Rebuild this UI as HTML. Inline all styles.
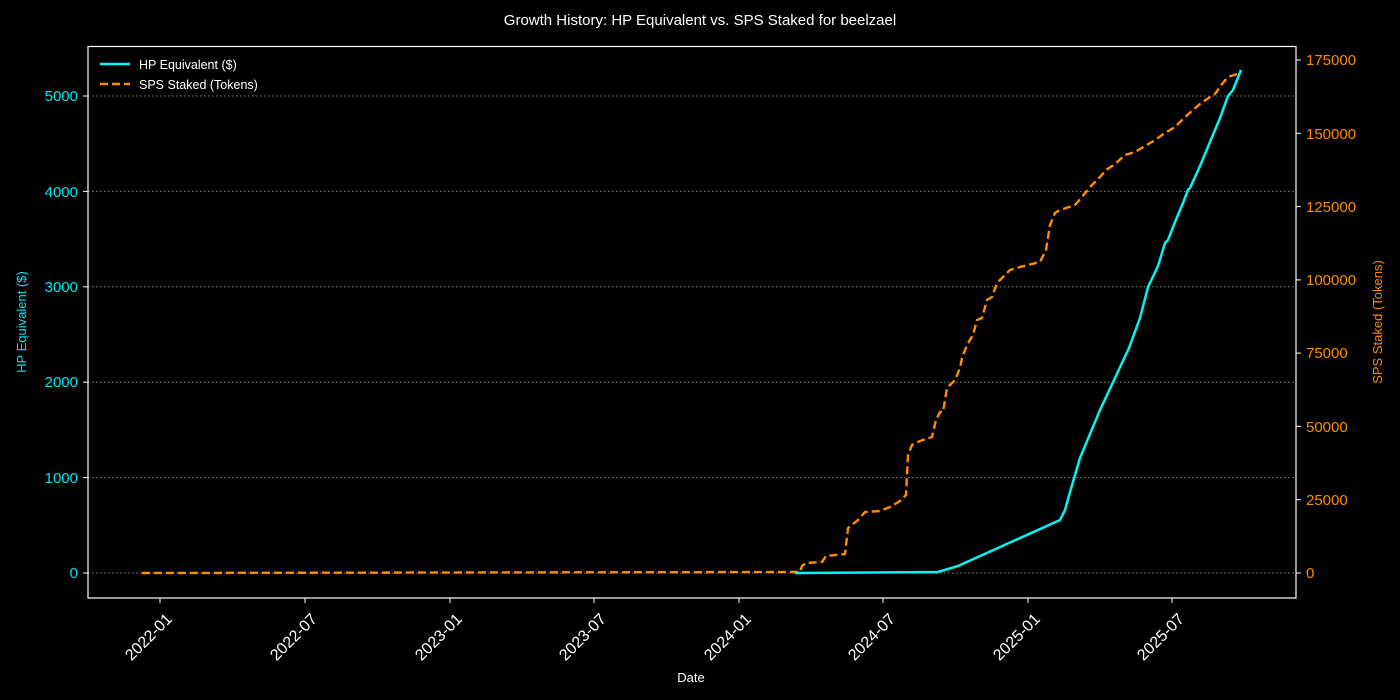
<!DOCTYPE html>
<html><head><meta charset="utf-8"><style>
html,body{margin:0;padding:0;background:#000;width:1400px;height:700px;overflow:hidden}
svg text{font-family:"Liberation Sans",sans-serif}
</style></head><body>
<svg width="1400" height="700" viewBox="0 0 1400 700" xmlns="http://www.w3.org/2000/svg">
<rect width="1400" height="700" fill="#000"/>
<text x="700" y="25" fill="#fff" font-size="15" text-anchor="middle">Growth History: HP Equivalent vs. SPS Staked for beelzael</text>
<g stroke="#888" stroke-width="1" stroke-dasharray="1.5,2.5">
<line x1="88" x2="1296" y1="573" y2="573"/>
<line x1="88" x2="1296" y1="477.6" y2="477.6"/>
<line x1="88" x2="1296" y1="382.2" y2="382.2"/>
<line x1="88" x2="1296" y1="286.8" y2="286.8"/>
<line x1="88" x2="1296" y1="191.4" y2="191.4"/>
<line x1="88" x2="1296" y1="96" y2="96"/>
</g>
<rect x="88" y="46.5" width="1208" height="551.5" fill="none" stroke="#fff" stroke-width="1.2"/>
<g stroke="#fff" stroke-width="1">
<line x1="83" x2="88" y1="573" y2="573"/><line x1="83" x2="88" y1="477.6" y2="477.6"/><line x1="83" x2="88" y1="382.2" y2="382.2"/><line x1="83" x2="88" y1="286.8" y2="286.8"/><line x1="83" x2="88" y1="191.4" y2="191.4"/><line x1="83" x2="88" y1="96" y2="96"/>
<line x1="1296" x2="1301" y1="573" y2="573"/><line x1="1296" x2="1301" y1="499.7" y2="499.7"/><line x1="1296" x2="1301" y1="426.4" y2="426.4"/><line x1="1296" x2="1301" y1="353.1" y2="353.1"/><line x1="1296" x2="1301" y1="279.9" y2="279.9"/><line x1="1296" x2="1301" y1="206.6" y2="206.6"/><line x1="1296" x2="1301" y1="133.3" y2="133.3"/><line x1="1296" x2="1301" y1="60" y2="60"/>
<line x1="160" x2="160" y1="598" y2="603"/><line x1="305" x2="305" y1="598" y2="603"/><line x1="450" x2="450" y1="598" y2="603"/><line x1="594" x2="594" y1="598" y2="603"/><line x1="739" x2="739" y1="598" y2="603"/><line x1="883" x2="883" y1="598" y2="603"/><line x1="1028" x2="1028" y1="598" y2="603"/><line x1="1172" x2="1172" y1="598" y2="603"/>
</g>
<g fill="#00e5ee" font-size="15" text-anchor="end">
<text x="78" y="578">0</text><text x="78" y="483">1000</text><text x="78" y="387">2000</text><text x="78" y="292">3000</text><text x="78" y="197">4000</text><text x="78" y="101">5000</text>
</g>
<g fill="#ff8c00" font-size="15">
<text x="1306" y="578">0</text><text x="1306" y="505">25000</text><text x="1306" y="432">50000</text><text x="1306" y="358">75000</text><text x="1306" y="285">100000</text><text x="1306" y="212">125000</text><text x="1306" y="139">150000</text><text x="1306" y="65">175000</text>
</g>
<text transform="translate(26,322) rotate(-90)" fill="#00e5ee" font-size="13" text-anchor="middle">HP Equivalent ($)</text>
<text transform="translate(1382,322) rotate(-90)" fill="#ff8c00" font-size="13" text-anchor="middle">SPS Staked (Tokens)</text>
<g fill="#fff" font-size="16" text-anchor="end">
<text transform="translate(173,620) rotate(-45)">2022-01</text>
<text transform="translate(318,620) rotate(-45)">2022-07</text>
<text transform="translate(463,620) rotate(-45)">2023-01</text>
<text transform="translate(607,620) rotate(-45)">2023-07</text>
<text transform="translate(752,620) rotate(-45)">2024-01</text>
<text transform="translate(896,620) rotate(-45)">2024-07</text>
<text transform="translate(1041,620) rotate(-45)">2025-01</text>
<text transform="translate(1185,620) rotate(-45)">2025-07</text>
</g>
<text x="691" y="682" fill="#fff" font-size="13" text-anchor="middle">Date</text>
<polyline fill="none" stroke="#ff8c00" stroke-width="2.4" stroke-dasharray="8,4" points="142,573 795,572 800,572 802,566 806,563 822,562 826,556 845,554 848,528 858,520 865,512 880,511 890,507 900,501 906,495 908,455 912,445 920,441 932,437 936,420 940,412 943,412 947,388 955,380 960,368 962,358 967,345 973,335 977,320 982,318 987,300 992,297 997,283 1000,280 1010,270 1020,267 1040,262 1046,250 1050,225 1055,213 1060,210 1075,205 1082,197 1090,187 1100,177 1106,170 1115,164 1125,155 1135,152 1145,146 1155,140 1165,133 1175,127 1185,117 1200,104 1210,97 1215,94 1222,84 1228,77 1234,75 1240,73"/>
<polyline fill="none" stroke="#00f5f5" stroke-width="2.5" points="795,573 938,572 958,566 1060,520 1065,510 1070,492 1080,458 1100,410 1129,348 1140,318 1148,287 1158,266 1165,243 1168,240 1175,222 1183,203 1188,190 1190,188 1200,166 1220,118 1228,96 1233,90 1241,70"/>
<line x1="100" x2="130" y1="64" y2="64" stroke="#00f5f5" stroke-width="2.5"/>
<line x1="100" x2="130" y1="84" y2="84" stroke="#ff8c00" stroke-width="2.4" stroke-dasharray="8,4"/>
<text x="139" y="69" fill="#fff" font-size="12.5">HP Equivalent ($)</text>
<text x="139" y="89" fill="#fff" font-size="12.5">SPS Staked (Tokens)</text>
</svg>
</body></html>
